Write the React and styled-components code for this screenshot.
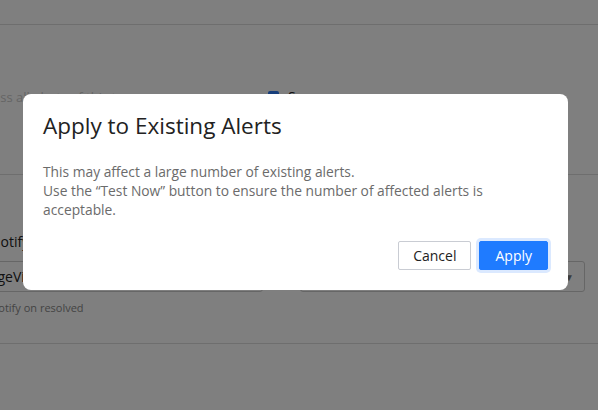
import React from "react"
import styled, { createGlobalStyle } from "styled-components"

const GlobalStyle = createGlobalStyle`
	html, body {
		margin: 0;
		padding: 0;
		background: #fff;
		font-family: "Open Sans", "Noto Sans", sans-serif;
		color: #333;
	}
`

const Page = styled.div`
	height: 100vh;
	overflow: hidden;
	background: #fff;
`

const TopBar = styled.div`
	height: 24px;
	border-bottom: 1px solid #dcdcdc;
`

const Inner = styled.div`
	margin-left: -34px;
	width: 632px;
`

const Section = styled.div`
	padding: ${p => p.$pad};
	border-bottom: 1px solid #dcdcdc;
`

const Row = styled.div`
	display: flex;
	align-items: center;
	gap: ${p => p.$gap || "0"};
`

const Muted = styled.span`
	width: 302px;
	font-size: 13px;
	color: #cacaca;
`

const Check = styled.span`
	width: 11px;
	height: 11px;
	border-radius: 2px;
	background: #2f7df6;
	margin-right: 9px;
`

const CheckLabel = styled.span`
	font-size: 14px;
	color: #222;
`

const Label = styled.div`
	font-size: 14px;
	color: #222;
	padding-left: 24px;
	margin-bottom: 10px;
`

const Input = styled.div`
	width: 297px;
	height: 31px;
	box-sizing: border-box;
	border: 1px solid #ccc;
	border-radius: 3px;
	padding: 0 10px;
	display: flex;
	align-items: center;
	font-size: 14px;
	color: #222;
`

const Select = styled(Input)`
	width: 285px;
	justify-content: flex-end;
	color: #777;
	font-size: 10px;
`

const Help = styled.div`
	font-size: 11px;
	color: #888;
	padding-left: 24px;
	margin-top: 8px;
`

const Overlay = styled.div`
	position: fixed;
	inset: 0;
	background: rgba(0, 0, 0, 0.5);
	display: flex;
	align-items: flex-start;
	justify-content: center;
	padding-top: 94px;
`

const Modal = styled.div`
	width: 545px;
	box-sizing: border-box;
	background: #fff;
	border-radius: 8px;
	padding: 18px 20px 20px 20px;
	margin-left: -7px;
`

const Title = styled.h2`
	margin: 0;
	font-size: 22.5px;
	font-weight: 400;
	color: #222;
	line-height: 28px;
`

const Body = styled.p`
	margin: 22px 0 0;
	font-size: 13.8px;
	line-height: 19px;
	color: #6b6b6b;
`

const Footer = styled.div`
	display: flex;
	justify-content: flex-end;
	gap: 8px;
	margin-top: 22px;
`

const Button = styled.button`
	height: 29px;
	box-sizing: border-box;
	padding: 0 ${p => (p.$primary ? "15px" : "14px")};
	font-family: inherit;
	font-size: 14px;
	border-radius: 2px;
	cursor: pointer;
	border: 1px solid ${p => (p.$primary ? "#1f7bff" : "#c9ccd3")};
	background: ${p => (p.$primary ? "#1f7bff" : "#fff")};
	color: ${p => (p.$primary ? "#fff" : "#222")};
	box-shadow: ${p => (p.$primary ? "0 0 0 3px #dbe9ff" : "none")};
`

const App = () => {
	return (
		<>
			<GlobalStyle />
			<Page>
				<TopBar />
				<Inner>
					<Section $pad="62px 0 68px">
						<Row>
							<Muted>Dismiss all alerts of this type</Muted>
							<Check />
							<CheckLabel>Snooze</CheckLabel>
						</Row>
					</Section>
					<Section $pad="57px 0 28px">
						<Label>Notify</Label>
						<Row $gap="37px">
							<Input>StageView</Input>
							<Select>▼</Select>
						</Row>
						<Help>Notify on resolved</Help>
					</Section>
				</Inner>
			</Page>
			<Overlay>
				<Modal>
					<Title>Apply to Existing Alerts</Title>
					<Body>
						This may affect a large number of existing alerts.
						<br />
						Use the “Test Now” button to ensure the number of affected alerts is
						acceptable.
					</Body>
					<Footer>
						<Button>Cancel</Button>
						<Button $primary>Apply</Button>
					</Footer>
				</Modal>
			</Overlay>
		</>
	)
}

export default App
